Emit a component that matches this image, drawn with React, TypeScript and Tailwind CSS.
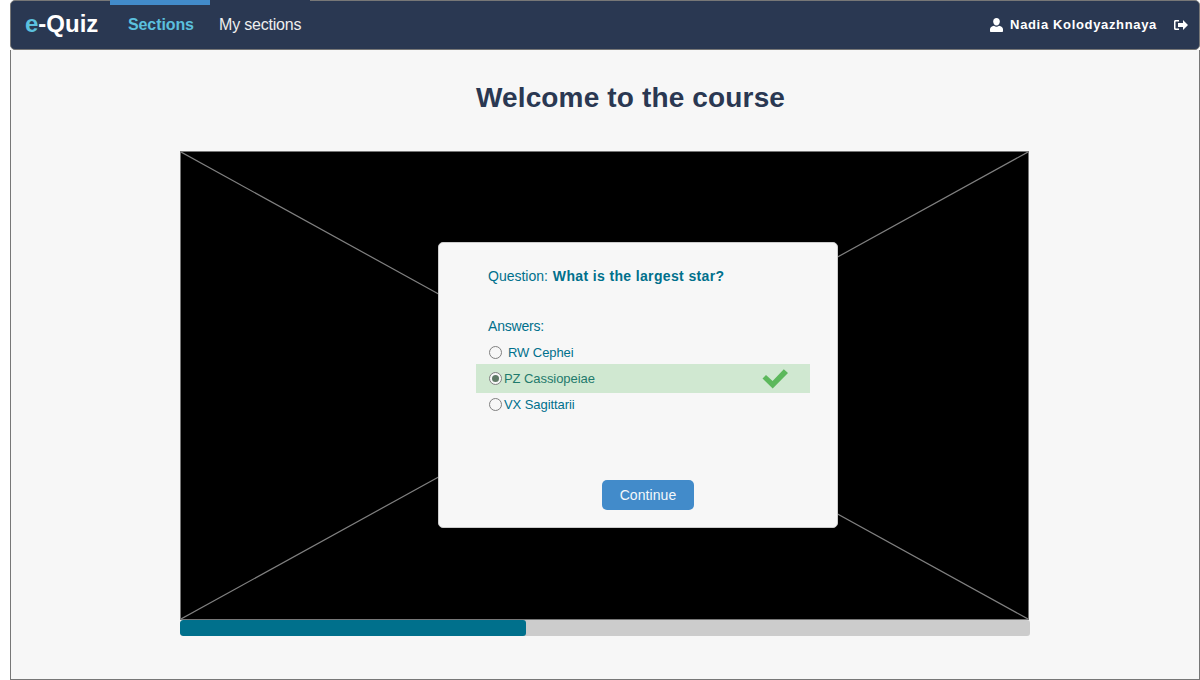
import React from 'react';

const answers = [
  { label: 'RW Cephei', checked: false, correct: false },
  { label: 'PZ Cassiopeiae', checked: true, correct: true },
  { label: 'VX Sagittarii', checked: false, correct: false },
];

const UserIcon = () => (
  <svg className="mr-[7px] h-[14px] w-[13px]" viewBox="0 0 13 14" fill="currentColor">
    <path d="M6.5 0C8.6 0 9.8 1.4 9.8 3.4C9.8 5.6 8.6 7.4 6.5 7.4C4.4 7.4 3.2 5.6 3.2 3.4C3.2 1.4 4.4 0 6.5 0Z" />
    <path d="M0 11.2C0 9.4 1.6 8.6 4 7.8C4.8 8.4 5.6 8.7 6.5 8.7C7.4 8.7 8.2 8.4 9 7.8C11.4 8.6 13 9.4 13 11.2V13C13 13.6 12.6 14 12 14H1C.4 14 0 13.6 0 13Z" />
  </svg>
);

const LogoutIcon = () => (
  <svg className="ml-[17px] h-[10px] w-[14px]" viewBox="0 0 14 10" fill="currentColor">
    <path d="M1.5 0H5V1.5H2C1.7 1.5 1.5 1.7 1.5 2V8C1.5 8.3 1.7 8.5 2 8.5H5V10H1.5C.6 10 0 9.4 0 8.5V1.5C0 .6 .6 0 1.5 0Z" />
    <path d="M9 0L14 5L9 10V7H4V3H9Z" />
  </svg>
);

const CheckIcon = () => (
  <svg className="ml-auto mr-[22px] h-[20px] w-[26px] text-[#5cb85c]" viewBox="0 0 26 20" fill="currentColor">
    <path d="M.5 9.5L4 6L10.6 12L21.8 .2L26 4L10.7 19.5Z" />
  </svg>
);

const Radio: React.FC<{ checked: boolean }> = ({ checked }) => (
  <span className="flex h-[13px] w-[13px] shrink-0 items-center justify-center rounded-full border border-[#808080] bg-[#f7f7f7]">
    {checked && <span className="h-[7px] w-[7px] rounded-full bg-[#5f7a66]" />}
  </span>
);

const Navbar: React.FC = () => (
  <nav className="flex h-[50px] shrink-0 items-stretch rounded-[5px] border border-[#777777] bg-[#2a3852] text-white">
    <a className="w-[99px] pl-[14px] pt-[6px] text-[24px] leading-[33px] font-bold">
      <span className="text-[#5bc0de]">e</span>-Quiz
    </a>
    <a className="-mt-px w-[100px] border-t-[5px] border-[#428bca] pl-[18px] pt-[5px] text-[16px] leading-[30px] font-bold tracking-[-0.1px] text-[#5bc0de]">
      Sections
    </a>
    <a className="-mt-px w-[100px] border-t-[5px] border-[#2a3852] pl-[9px] pt-[5px] text-[16px] leading-[30px] tracking-[-0.2px] text-[#eeeeee]">
      My sections
    </a>
    <div className="ml-auto flex items-center pb-px pr-[11px] text-[13px] font-bold tracking-[0.66px]">
      <UserIcon />
      <span>Nadia Kolodyazhnaya</span>
      <LogoutIcon />
    </div>
  </nav>
);

const QuizCard: React.FC = () => (
  <div className="absolute left-[257px] top-[90px] flex h-[286px] w-[400px] flex-col rounded-[5px] border border-[#cccccc] bg-[#f7f7f7] text-[14px] text-[#00708c]">
    <p className="ml-[49px] mt-[24px] leading-[18px]">
      Question: <span className="ml-px font-bold tracking-[0.36px]">What is the largest star?</span>
    </p>
    <p className="ml-[49px] mt-[32px] leading-[18px] tracking-[-0.2px]">Answers:</p>
    <ul className="ml-[37px] mt-[6px] w-[334px] text-[13px] tracking-[-0.07px]">
      {answers.map(a => (
        <li
          key={a.label}
          className={`flex items-center pl-[13px] ${a.correct ? 'h-[29px] bg-[#d0e8d1] text-[#1f7a6c]' : 'h-[23px]'}`}
        >
          <Radio checked={a.checked} />
          <span className={a.label === 'RW Cephei' ? 'ml-[6px]' : 'ml-[2px]'}>{a.label}</span>
          {a.correct && <CheckIcon />}
        </li>
      ))}
    </ul>
    <button className="ml-[163px] mt-[64px] h-[30px] w-[92px] rounded-[5px] bg-[#428bca] text-[14px] tracking-[0.07px] text-[#f4f8fb]">
      Continue
    </button>
  </div>
);

export default function App() {
  return (
    <div className="flex h-[680px] w-[1200px] flex-col overflow-hidden bg-white pl-[10px] font-['Liberation_Sans',Arial,sans-serif]">
      <Navbar />
      <main className="flex min-h-0 flex-1 flex-col border-x border-b border-[#777777] bg-[#f7f7f7]">
        <h1 className="mt-[30px] pl-[51px] text-center text-[28px] leading-[36px] font-bold tracking-[0.15px] text-[#2a3852]">
          Welcome to the course
        </h1>
        <div className="relative ml-[169px] mt-[35px] h-[469px] w-[849px] border border-[#777777] bg-black">
          <svg className="absolute inset-0 h-full w-full" viewBox="0 0 847 467" preserveAspectRatio="none">
            <line x1="0" y1="0" x2="847" y2="467" stroke="#808080" strokeWidth="1.2" />
            <line x1="847" y1="0" x2="0" y2="467" stroke="#808080" strokeWidth="1.2" />
          </svg>
          <QuizCard />
        </div>
        <div className="ml-[169px] h-[16px] w-[850px] overflow-hidden rounded-[3px] bg-[#cccccc]">
          <div className="h-full rounded-[3px] bg-[#00708c]" style={{ width: `${(346 / 850) * 100}%` }} />
        </div>
      </main>
    </div>
  );
}
